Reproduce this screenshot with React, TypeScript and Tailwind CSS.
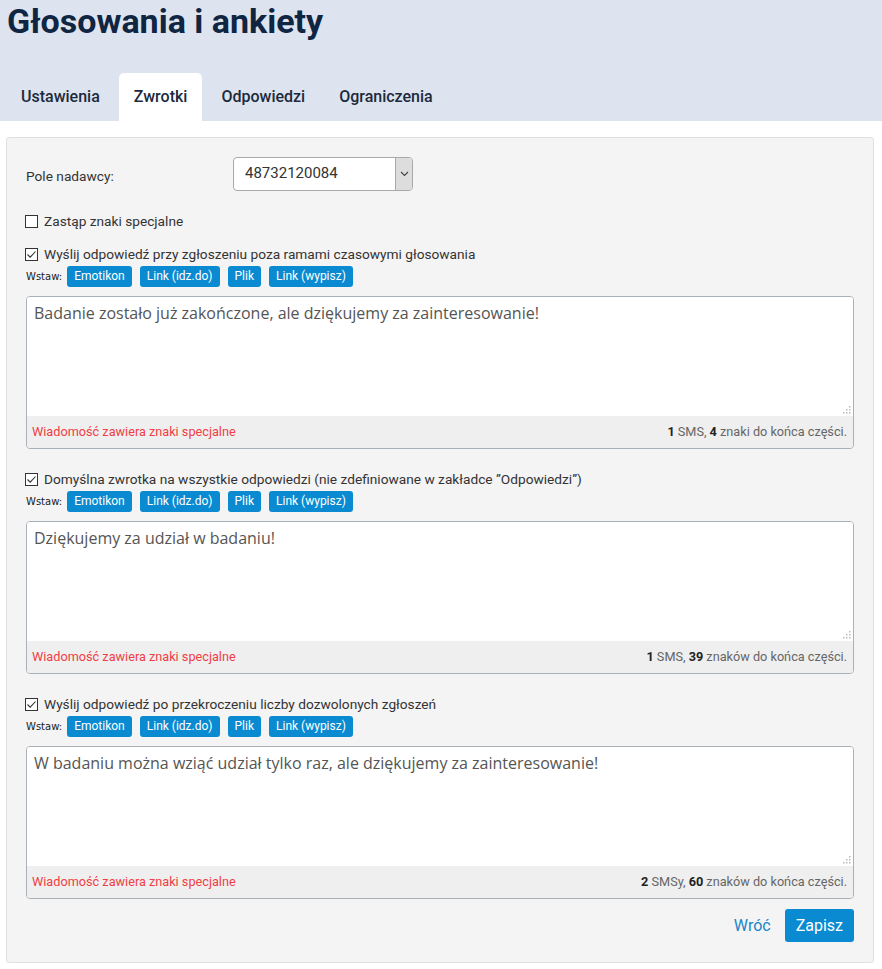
import React from "react";

const ui = { fontFamily: "Roboto, 'Liberation Sans', sans-serif" };
const body = { fontFamily: "'Open Sans', 'Liberation Sans', sans-serif" };

const tabs = ["Ustawienia", "Zwrotki", "Odpowiedzi", "Ograniczenia"];

type Section = {
  label: string;
  text: string;
  count: React.ReactNode;
};

const sections: Section[] = [
  {
    label: "Wyślij odpowiedź przy zgłoszeniu poza ramami czasowymi głosowania",
    text: "Badanie zostało już zakończone, ale dziękujemy za zainteresowanie!",
    count: (
      <>
        <b className="text-[#222]">1</b> SMS, <b className="text-[#222]">4</b> znaki do końca części.
      </>
    ),
  },
  {
    label: "Domyślna zwrotka na wszystkie odpowiedzi (nie zdefiniowane w zakładce \u201dOdpowiedzi\u201d)",
    text: "Dziękujemy za udział w badaniu!",
    count: (
      <>
        <b className="text-[#222]">1</b> SMS, <b className="text-[#222]">39</b> znaków do końca części.
      </>
    ),
  },
  {
    label: "Wyślij odpowiedź po przekroczeniu liczby dozwolonych zgłoszeń",
    text: "W badaniu można wziąć udział tylko raz, ale dziękujemy za zainteresowanie!",
    count: (
      <>
        <b className="text-[#222]">2</b> SMSy, <b className="text-[#222]">60</b> znaków do końca części.
      </>
    ),
  },
];

function Checkbox({ checked, label }: { checked: boolean; label: string }) {
  return (
    <label className="flex h-5 items-center gap-[6px] text-[13.7px] leading-5 text-[#333]">
      <span className="ml-[-1px] grid h-[13px] w-[13px] shrink-0 place-items-center border border-[#333] bg-white">
        {checked && (
          <svg width="11" height="11" viewBox="0 0 11 11">
            <path d="M1.5 5.5 L4.2 8.2 L9.5 2.5" fill="none" stroke="#333" strokeWidth="1.1" />
          </svg>
        )}
      </span>
      <span>{label}</span>
    </label>
  );
}

function InsertRow() {
  const items = ["Emotikon", "Link (idz.do)", "Plik", "Link (wypisz)"];
  return (
    <div className="mt-[2px] flex h-[21px] items-center">
      <span className="mr-[5px] text-[10px] text-[#222]" style={{ fontFamily: "'DejaVu Sans', sans-serif" }}>
        Wstaw:
      </span>
      <div className="flex gap-2">
        {items.map((i) => (
          <button
            key={i}
            className="h-[21px] rounded-[3px] bg-[#0a8ad0] px-[7px] text-[12px] leading-[21px] text-white"
          >
            {i}
          </button>
        ))}
      </div>
    </div>
  );
}

function MessageBox({ s }: { s: Section }) {
  return (
    <div className="mt-[9px] overflow-hidden rounded-[4px] border border-[#aab0b8]">
      <div className="relative h-[119px] bg-white px-[7px] py-[5px]">
        <p className="text-[16px] leading-[22px] text-[#555]" style={body}>
          {s.text}
        </p>
        <svg className="absolute bottom-[2px] right-[2px]" width="8" height="8" viewBox="0 0 8 8">
          <rect x="6" y="0" width="1.5" height="1.5" fill="#bbb" />
          <rect x="3" y="3" width="1.5" height="1.5" fill="#bbb" />
          <rect x="6" y="3" width="1.5" height="1.5" fill="#bbb" />
          <rect x="0" y="6" width="1.5" height="1.5" fill="#bbb" />
          <rect x="3" y="6" width="1.5" height="1.5" fill="#bbb" />
          <rect x="6" y="6" width="1.5" height="1.5" fill="#bbb" />
        </svg>
      </div>
      <div className="flex h-[32px] items-center justify-between bg-[#efefef] pl-[5px] pr-[6px] text-[12.7px]">
        <span className="text-[#f03e45]">Wiadomość zawiera znaki specjalne</span>
        <span className="text-[#666]">{s.count}</span>
      </div>
    </div>
  );
}

export default function App() {
  return (
    <div className="min-h-screen bg-white" style={ui}>
      <header className="bg-[#dde3ef]">
        <h1 className="px-[7px] pt-[1px] text-[34px] font-bold leading-[40px] text-[#0f2542]">
          Głosowania i ankiety
        </h1>
        <nav className="mt-[32px] flex gap-[4px] px-[6px]">
          {tabs.map((t) => (
            <div
              key={t}
              className={`h-[48px] rounded-t-[5px] px-[15px] text-[16px] font-medium leading-[48px] text-[#1c2a3c] ${
                t === "Zwrotki" ? "bg-white" : ""
              }`}
            >
              {t}
            </div>
          ))}
        </nav>
      </header>

      <main className="pl-[6px] pr-[8px] pt-4">
        <div className="rounded-[3px] border border-[#e0e0e0] bg-[#f4f4f4] px-[19px] pb-[20px] pt-[19px]">
          <div className="flex items-center">
            <span className="w-[207px] pt-1 text-[13.7px] text-[#333]">Pole nadawcy:</span>
            <div className="flex h-[34px] w-[180px] overflow-hidden rounded-[4px] border border-[#a9a9a9] bg-white">
              <span className="flex-1 px-[11px] text-[15px] leading-[30px] text-[#333]">48732120084</span>
              <span className="grid w-[17px] place-items-center border-l border-[#a9a9a9] bg-[#dddddd]">
                <svg width="9" height="6" viewBox="0 0 9 6">
                  <path d="M1 1 L4.5 4.5 L8 1" fill="none" stroke="#444" strokeWidth="1.1" />
                </svg>
              </span>
            </div>
          </div>

          <div className="mt-5">
            <Checkbox checked={false} label="Zastąp znaki specjalne" />
          </div>

          {sections.map((s, i) => (
            <div key={i} className={i === 0 ? "mt-[13px]" : "mt-5"}>
              <Checkbox checked label={s.label} />
              <InsertRow />
              <MessageBox s={s} />
            </div>
          ))}

          <div className="mt-[10px] flex items-center justify-end gap-[14px]">
            <a className="text-[16px] text-[#1b86c8]">Wróć</a>
            <button className="h-[33px] rounded-[3px] bg-[#0a8ad0] px-[11px] text-[16px] text-white">Zapisz</button>
          </div>
        </div>
      </main>
    </div>
  );
}
